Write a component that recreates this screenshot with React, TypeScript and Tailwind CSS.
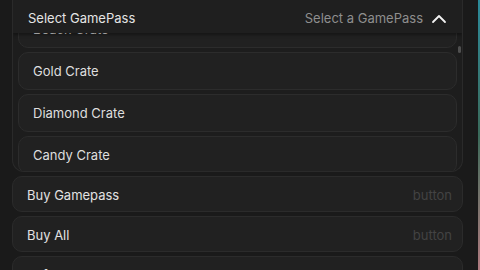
import React from "react";

const font = { fontFamily: "Inter, 'Noto Sans', sans-serif" };

function Item({ label, className = "" }: { label: string; className?: string }) {
  return (
    <div
      className={`h-[38px] shrink-0 flex items-center pl-[14px] pt-[2px] rounded-[10px] border border-[#2c2c2c] bg-[#212121] text-[13px] text-[#dedede] ${className}`}
    >
      {label}
    </div>
  );
}

function Btn({ label }: { label: string }) {
  return (
    <div className="h-[36px] shrink-0 flex items-center justify-between pl-[14px] pr-[10px] pt-[3px] rounded-[10px] border border-[#2b2b2b] bg-[#212121] text-[13px]">
      <span className="text-[#e2e2e2]">{label}</span>
      <span className="text-[#434343]">button</span>
    </div>
  );
}

export default function App() {
  return (
    <div className="w-[480px] h-[270px] overflow-hidden bg-[#1a1a1a] flex" style={font}>
      <div className="flex-1 flex flex-col gap-[4px] pl-[12px] pr-[15px]">
        <div className="relative h-[172px] shrink-0 flex flex-col rounded-b-[12px] border-x border-b border-[#2a2a2a] bg-[#1d1d1d] overflow-hidden">
          <div className="relative z-10 h-[33px] shrink-0 flex items-center justify-between pl-[15px] pr-[15px] pt-[5px] bg-[#1f1f1f] shadow-[0_2px_3px_rgba(0,0,0,0.35)]">
            <span className="text-[13px] text-[#e4e4e4]">Select GamePass</span>
            <div className="flex items-center gap-[8px]">
              <span className="text-[13px] text-[#8e8e8e]">Select a GamePass</span>
              <svg width="16" height="16" viewBox="0 0 16 16" fill="none">
                <path d="M2 11 L8 5 L14 11" stroke="#f2f2f2" strokeWidth="1.8" strokeLinecap="round" strokeLinejoin="round" />
              </svg>
            </div>
          </div>
          <div className="flex-1 flex flex-col gap-[4px] pl-[5px] pr-[5px] overflow-hidden">
            <Item label="Beach Crate" className="-mt-[23px]" />
            <Item label="Gold Crate" />
            <Item label="Diamond Crate" />
            <Item label="Candy Crate" />
          </div>
          <div className="absolute right-[1px] top-[46px] w-[3px] h-[7px] rounded-full bg-[#505050]" />
        </div>
        <Btn label="Buy Gamepass" />
        <Btn label="Buy All" />
        <Btn label="Refund All" />
      </div>
      <div className="w-[2px] h-full bg-gradient-to-b from-[#2a8a9a] via-[#3a6a5a] to-[#b07a80]" />
    </div>
  );
}
